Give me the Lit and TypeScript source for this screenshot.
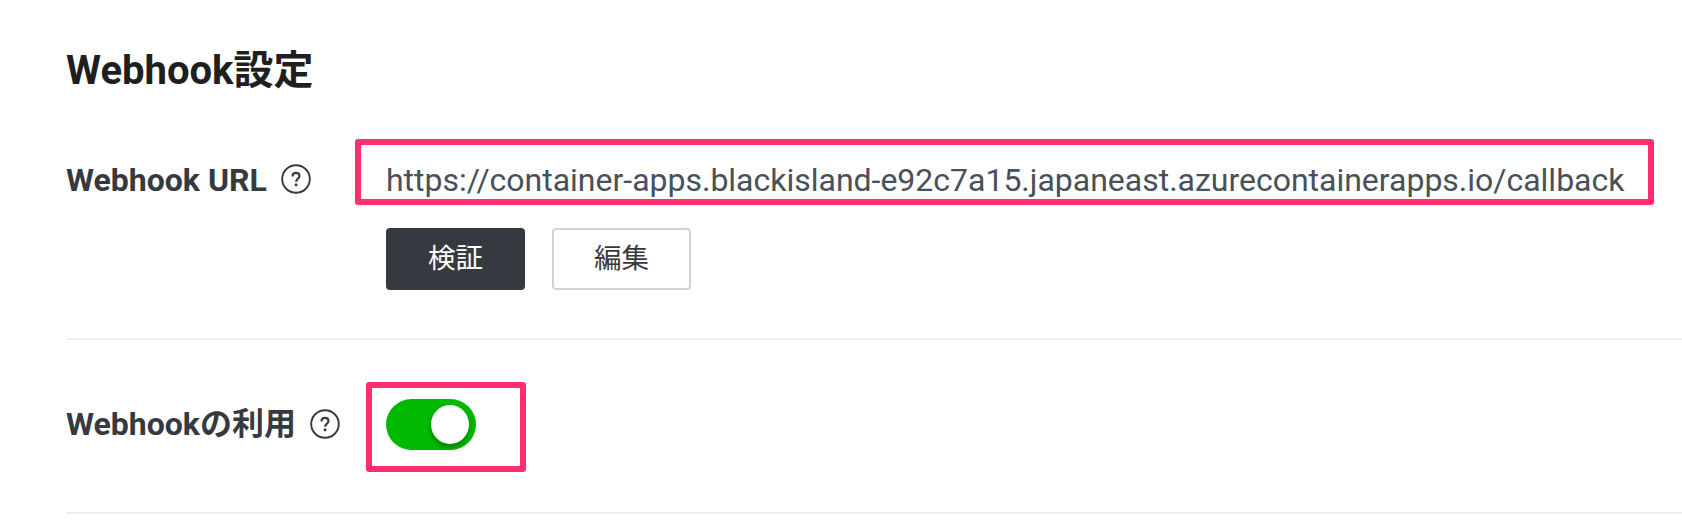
import { LitElement, html, css } from "lit";
import { customElement, state } from "lit/decorators.js";

@customElement("help-icon")
class HelpIcon extends LitElement {
  static styles = css`
    :host { display: block; width: 30px; height: 30px; flex: none; }
    .icon { display: block; }
  `;
  render() {
    return html`<svg class="icon" width="30" height="30" viewBox="0 0 30 30" fill="none" stroke="#353a40">
      <circle cx="15" cy="15" r="13.8" stroke-width="1.9" />
      <path d="M11.5 12.5C11.5 10.2 12.9 8.9 15 8.9C17.1 8.9 18.5 10.2 18.5 12.1C18.5 14.5 15.1 14.8 15.1 17.8" stroke-width="2.1" />
      <rect x="13.8" y="19.6" width="2.6" height="2.6" rx=".6" fill="#353a40" stroke="none" />
    </svg>`;
  }
}

@customElement("toggle-switch")
class ToggleSwitch extends LitElement {
  static styles = css`
    :host { display: block; }
    .track {
      box-sizing: border-box; width: 90px; height: 51px; padding: 6px 7px 6px 6px;
      display: flex; justify-content: flex-end; align-items: center;
      border: 0; border-radius: 26px; background: #00b900;
    }
    .knob { width: 38px; height: 39px; border-radius: 50%; background: #fff; box-shadow: 0 3px 5px rgba(0, 0, 0, .35); }
  `;
  render() {
    return html`<button class="track" role="switch" aria-checked="true"><span class="knob"></span></button>`;
  }
}

@customElement("app-root")
class AppRoot extends LitElement {
  @state() url = "https://container-apps.blackisland-e92c7a15.japaneast.azurecontainerapps.io/callback";

  static styles = css`
    :host {
      display: block; box-sizing: border-box; height: 524px; overflow: hidden;
      padding-left: 66px; background: #fff; color: #353a40;
      font-family: Roboto, "Noto Sans CJK JP", sans-serif;
    }
    .title { margin: 0; padding-top: 47px; height: 92px; box-sizing: content-box; font-size: 40px; line-height: 48px; font-weight: 700; color: #1f1f1f; }
    .row { display: grid; grid-template-columns: 289px 1fr; box-sizing: border-box; border-bottom: 2px solid #efefef; }
    .row.url-row { height: 201px; }
    .row.use-row { height: 174px; }
    .label { display: flex; align-items: center; gap: 14px; height: 40px; font-size: 32px; font-weight: 700; line-height: 40px; white-space: nowrap; }
    .url-row .label { margin-top: 20px; }
    .url-row .label-text { padding-top: 2px; }
    .use-row .label { margin-top: 64px; }
    .frame { box-sizing: border-box; border: 6px solid #ff2f6e; border-radius: 3px; }
    .url-frame { width: 1299px; height: 66px; padding: 15px 0 0 25px; font-size: 32px; line-height: 40px; color: #485159; white-space: nowrap; letter-spacing: -.012px; }
    .actions { display: flex; gap: 27px; margin: 23px 0 0 31px; }
    .btn { box-sizing: border-box; width: 139px; height: 62px; padding: 0; border: 2px solid #cfd4d9; border-radius: 4px; background: #fff; color: #353a40; font: 400 27.5px/40px Roboto, "Noto Sans CJK JP", sans-serif; }
    .btn.primary { background: #353a40; border-color: #353a40; color: #fff; }
    .switch-frame { width: 160px; height: 90px; margin: 42px 0 0 11px; padding: 11px 0 0 14px; }
  `;

  render() {
    return html`
      <h2 class="title">Webhook設定</h2>
      <section class="row url-row">
        <div class="label"><span class="label-text">Webhook URL</span><help-icon></help-icon></div>
        <div>
          <div class="frame url-frame">${this.url}</div>
          <div class="actions">
            <button class="btn primary">検証</button>
            <button class="btn">編集</button>
          </div>
        </div>
      </section>
      <section class="row use-row">
        <div class="label"><span class="label-text">Webhookの利用</span><help-icon></help-icon></div>
        <div class="frame switch-frame"><toggle-switch></toggle-switch></div>
      </section>
    `;
  }
}
